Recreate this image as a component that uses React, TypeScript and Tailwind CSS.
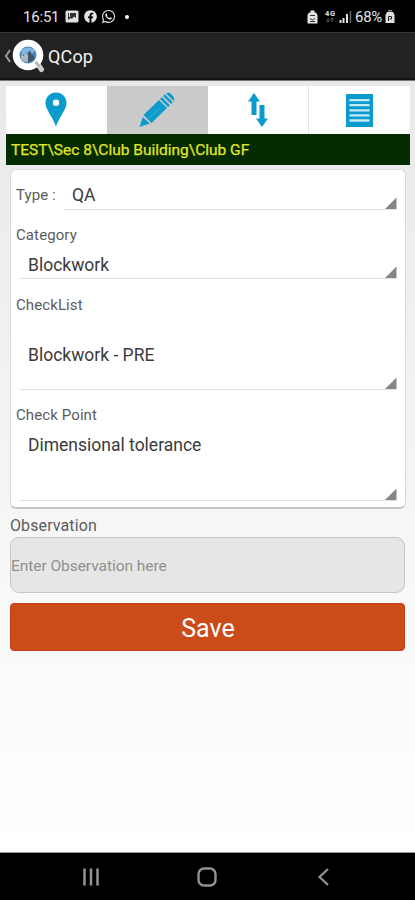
import type { ReactNode } from 'react';
import { FaFacebook, FaWhatsapp } from 'react-icons/fa';

function StatusBar() {
  return (
    <div className="flex h-8 items-center justify-between bg-black pl-[23px] pr-[20px] pt-px text-[#e4e4e4]">
      <div className="flex items-center">
        <span className="w-[36px] whitespace-nowrap text-[15px] leading-5 tracking-[-0.2px]">16:51</span>
        <svg className="ml-[6px]" width="14" height="13" viewBox="0 0 14 13">
          <rect x="0.5" y="0.5" width="13" height="12" rx="1.500" fill="#e0e0e0" />
          <path d="M3 3h8v5L9 6.500 7 9 5.500 8 3 10z" fill="#333" />
          <path d="M4.500 3v4" stroke="#e0e0e0" />
        </svg>
        <FaFacebook className="ml-[5px]" size={13} />
        <FaWhatsapp className="ml-[4px]" size={15} />
        <span className="ml-[9px] h-[4px] w-[4px] rounded-full bg-white" />
      </div>
      <div className="flex items-center">
        <svg width="11" height="14" viewBox="0 0 11 14">
          <path d="M3.500 0.500h4v2h1.500L10.500 5v8.500H0.500V5L2 2.500h1.500z" fill="#e4e4e4" />
          <path d="M3 5.500h5M3 8.500l2.500 1.500L8 8.500M3 11.500h5" stroke="#333" fill="none" />
        </svg>
        <svg className="ml-[7px]" width="10" height="13" viewBox="0 0 10 13">
          <text x="0" y="6" fontSize="7.500" fontWeight="700" textLength="10" fill="#e0e0e0">4G</text>
          <path d="M3 8v4M1.500 10.500L3 12l1.500-1.500M7 12V8M5.500 9.500L7 8l1.500 1.500" stroke="#666" fill="none" />
        </svg>
        <svg className="ml-[4px]" width="13" height="13" viewBox="0 0 13 13">
          <path d="M1.500 13v-3M4.500 13V8M8 13V4" stroke="#e0e0e0" strokeWidth="2" />
          <path d="M11.500 13V1" stroke="#666" strokeWidth="1.500" />
        </svg>
        <span className="ml-[3px] w-[28px] whitespace-nowrap text-[15px] leading-5 tracking-[-0.3px]">68%</span>
        <svg className="ml-[2px]" width="10" height="13" viewBox="0 0 10 13">
          <path d="M3 0h4v1.500H3z" fill="#888" />
          <path d="M2 2h6l1.500 3v8h-9V5z" fill="#e0e0e0" />
          <path d="M3.500 11V6.500h3v2.500h-2" stroke="#222" fill="none" />
        </svg>
      </div>
    </div>
  );
}

function AppBar() {
  return (
    <header className="flex h-12 items-center border-t border-[#363636] border-b-2 border-b-[#121212] bg-[#222222] pl-[4px]">
      <svg width="7" height="14" viewBox="0 0 7 14" fill="none">
        <path d="M6 1L2 7l4 6" stroke="#9a9a9a" strokeWidth="2" />
      </svg>
      <svg className="ml-[1px]" width="34" height="34" viewBox="0 0 34 34">
        <path d="M25 24l4.500 6.500" stroke="#cfcfcf" strokeWidth="5" strokeLinecap="round" />
        <circle cx="16" cy="16" r="15.300" fill="#fff" />
        <path d="M23.500 23l4 4.500" stroke="#b5b5b5" strokeWidth="3" />
        <circle cx="16" cy="16" r="8.500" fill="#4d87bd" />
        <path d="M9 11q7-5 14 0l-2 3q-6-2-11 2z" fill="#82b7e4" />
        <path d="M9 20v-4l3 1 1-4 3 3v7q-5 0-7-3z" fill="#a8b9bf" />
        <path d="M16 23v-9l2-3 1 4 3 2v3q-3 4-6 3z" fill="#3b5965" />
      </svg>
      <h1 className="ml-[2px] pt-[2px] text-[18px] leading-6 tracking-[0.15px] text-[#f2f2f2]">QCop</h1>
    </header>
  );
}

function Tabs() {
  return (
    <nav className="mr-[-1px] grid h-[48px] grid-cols-4 bg-white">
      <button className="flex items-center justify-center pr-px">
        <svg width="22" height="36" viewBox="0 0 22 36">
          <path
            fillRule="evenodd"
            d="M11 0.500C5 0.500 0.500 5 0.500 11c0 4 2 7 4.500 11.500 3 5 5.500 10 6 12.500 0.500-2.500 3-7.500 6-12.500C19.500 18 21.500 15 21.500 11 21.500 5 17 0.500 11 0.500zM11 7.500a3.200 3.200 0 1 1 0 6.400 3.200 3.200 0 0 1 0-6.400z"
            fill="#0b9bcd"
          />
        </svg>
      </button>
      <button className="flex items-center justify-center bg-[#cbcbcb] pr-px">
        <svg width="36" height="36" viewBox="0 0 36 36">
          <path d="M4.500 23L20 8l8 8L12.500 31z" fill="#0b9bcd" />
          <path d="M3.800 25l7 6.500L0.500 35z" fill="#0b9bcd" />
          <path d="M21 7l2-1.800 8 8-2 1.900zM24 4l1.800-1.700 8 8L32 12zM27 1.300q3-1.500 5 0.700l2 2q2 2.500 0.700 5z" fill="#0b9bcd" />
          <path d="M10 26.500L20.500 16" stroke="#5db3d0" fill="none" strokeWidth="0.800" />
        </svg>
      </button>
      <button className="flex items-center justify-center border-r border-[#e4e4e4]">
        <svg width="20" height="34" viewBox="0 0 20 34" fill="#0b9bcd">
          <path d="M6 0l6 8.500H8.500V22h-5V8.500H0z" />
          <path d="M11.500 12h5v13.500H20L14 34l-6-8.500h3.500z" />
        </svg>
      </button>
      <button className="flex items-center justify-center">
        <svg width="27" height="33" viewBox="0 0 27 33">
          <path d="M0 0h27v33H0z" fill="#0b9bcd" />
          <path d="M3.500 6.200h20M3.500 11.200h20M3.500 16.300h20M3.500 21.400h20M3.500 26.500h20" stroke="#c5eaf6" strokeWidth="2.300" />
        </svg>
      </button>
    </nav>
  );
}

function Label({ children }: { children: ReactNode }) {
  return <div className="h-5 text-[15px] leading-[18px] tracking-[0.1px] text-[#5c5c5c]">{children}</div>;
}

// Spinner field: a value over a thin underline with a corner triangle
function Spinner({ value, className }: { value: string; className: string }) {
  return (
    <div className={`flex justify-between border-b border-[#e2e2e2] text-[17.5px] leading-6 text-[#3a3a3a] ${className}`}>
      <span>{value}</span>
      <svg className="self-end" width="12" height="12" viewBox="0 0 12 12">
        <path d="M11.500 0.500V12H0z" fill="#858585" />
      </svg>
    </div>
  );
}

export default function App() {
  return (
    <div className="flex h-[900px] w-[415px] flex-col bg-white font-[Roboto,sans-serif]">
      <StatusBar />
      <AppBar />
      <main className="flex-1 border-t border-[#777] bg-linear-to-b from-[#e9e9e9] via-[#f8f8f8] via-65% to-white px-[6px] pt-[5px]">
        <Tabs />
        <div className="mr-[-1px] flex h-[31px] items-center bg-[#042c00] pl-[5px] pt-[2px] text-[15.5px] text-[#e0e52a]">
          <span className="[-webkit-text-stroke:0.25px_#e0e52a]">TEST\Sec 8\Club Building\Club GF</span>
        </div>

        <div className="mx-[4px] mr-[3px] mt-[4px] h-[340px] rounded-[6px] border border-b-2 border-[#dadada] border-b-[#c6c6c6] bg-white pl-[5px] pr-[8px]">
          <div className="flex pt-[13px]">
            <div className="w-[48px] pt-[3px]">
              <Label>Type :</Label>
            </div>
            <Spinner value="QA" className="h-[27px] flex-1 pl-[8px]" />
          </div>
          <div className="mt-[16px]">
            <Label>Category</Label>
            <Spinner value="Blockwork" className="ml-[3px] mt-[6px] h-[27px] pl-[9px] pt-px" />
          </div>
          <div className="mt-[17px]">
            <Label>CheckList</Label>
            <Spinner value="Blockwork - PRE" className="ml-[3px] h-[74px] pl-[9px] pt-[27px]" />
          </div>
          <div className="mt-[16px]">
            <Label>Check Point</Label>
            <Spinner value="Dimensional tolerance" className="ml-[3px] mt-[6px] h-[69px] pl-[9px] pt-px" />
          </div>
        </div>

        <div className="ml-[4px] mr-[4px] mt-[7px]">
          <div className="h-[21px] text-[16px] leading-5 tracking-[0.1px] text-[#5c5c5c]">Observation</div>
          <input
            className="block h-[56px] w-full rounded-[9px] border border-[#c6c6c6] bg-[#e6e6e6] pt-[2px] text-[15.5px] tracking-[-0.05px] text-[#333] placeholder:text-[#909090]"
            placeholder="Enter Observation here"
          />
          <button className="mt-[10px] block h-[48px] w-full rounded-[4px] border border-[#c23c12] bg-[#cb4b19] pl-px pt-[2px] text-[25px] leading-none text-white">
            Save
          </button>
        </div>
      </main>
      <footer className="flex h-[48px] items-center justify-center border-t border-[#999] bg-black pr-[3px] text-[#929292]">
        <svg className="mr-[97px]" width="18" height="18" viewBox="0 0 18 18" stroke="currentColor" strokeWidth="2.500">
          <path d="M2.500 0.500v17M9 0.500v17M15.500 0.500v17" />
        </svg>
        <svg width="20" height="20" viewBox="0 0 20 20" fill="none" stroke="currentColor" strokeWidth="2.400">
          <rect x="1.500" y="1.500" width="17" height="17" rx="5.500" />
        </svg>
        <svg className="ml-[100px]" width="13" height="18" viewBox="0 0 13 18" fill="none" stroke="currentColor" strokeWidth="2.200">
          <path d="M11 1L2.500 9l8.500 8" />
        </svg>
      </footer>
    </div>
  );
}
